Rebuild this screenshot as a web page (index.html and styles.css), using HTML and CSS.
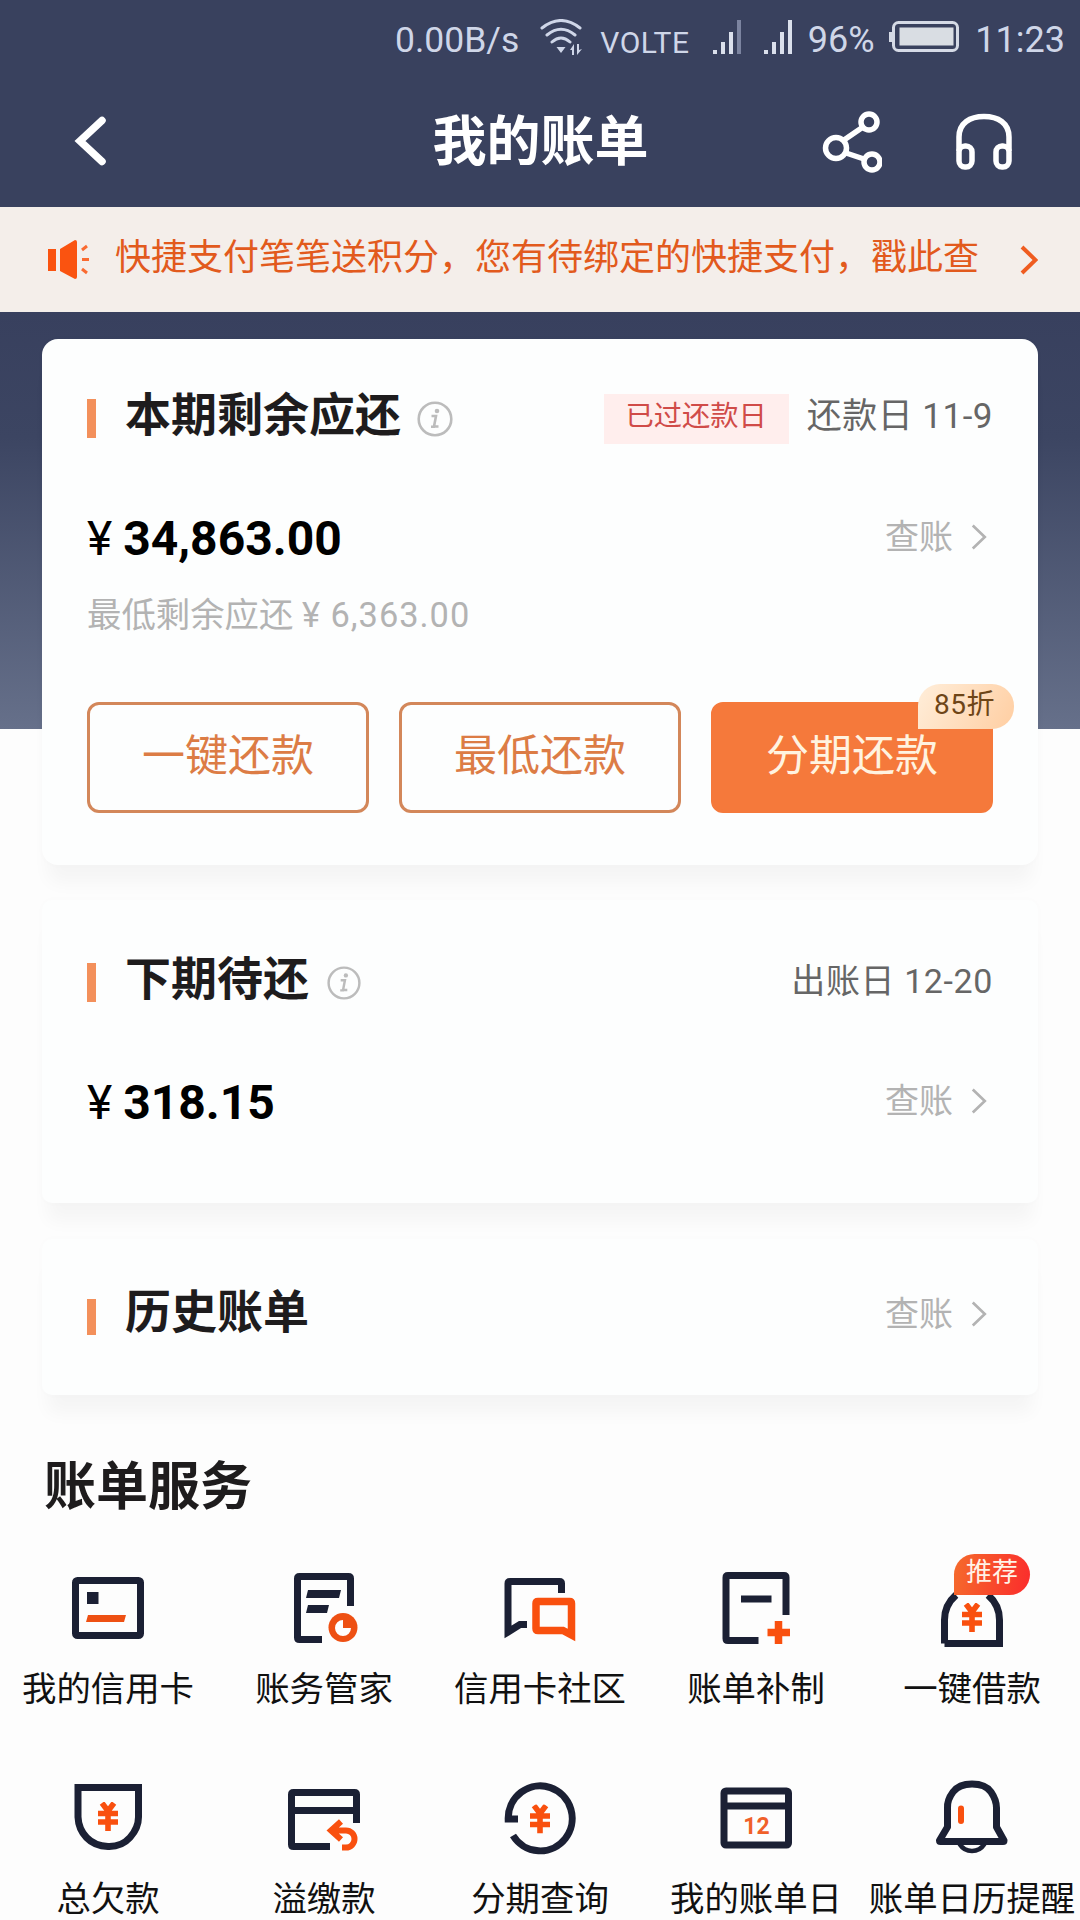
FILE: index.html
```html
<!DOCTYPE html>
<html lang="zh-CN">
<head>
<meta charset="utf-8">
<title>我的账单</title>
<link rel="stylesheet" href="styles.css">
</head>
<body>
<svg class="defs" width="0" height="0" aria-hidden="true">
  <symbol id="yuan" viewBox="0 0 20 29"><path d="M4 1 10 9 16 1M10 9V29M0 11.500H20M0 20H20" fill="none" stroke="currentColor" stroke-width="5.6"/></symbol>
  <symbol id="info" viewBox="0 0 36 36"><circle cx="18" cy="18" r="16.3" fill="none" stroke="currentColor" stroke-width="2.6"/><path d="M14.500 15H19L17 25.500H21.500M14 25.800H18" fill="none" stroke="currentColor" stroke-width="2.6"/><circle cx="20" cy="10" r="2.300" fill="currentColor"/></symbol>
  <symbol id="chevron" viewBox="0 0 18 30"><path d="M2 2 15.500 15 2 28" fill="none" stroke="currentColor"/></symbol>
</svg>

<header class="top">
  <div class="status">
    <span class="status-text speed">0.00B/s</span>
    <svg class="wifi" width="44" height="36" viewBox="0 0 44 36"><g fill="none" stroke="#cfd6e8" stroke-width="3" stroke-linecap="round"><path d="M2 9Q21-6 40 9M7 16Q21 4.500 35 16M12 23Q21 15 30 23"/></g><path d="M16.500 28H25.500L21 34ZM34 25V36H32V31H30ZM37 25H39V31L42 30 37 36Z" fill="#cfd6e8"/></svg>
    <span class="status-text volte">VOLTE</span>
    <svg class="signal first" width="29" height="35" viewBox="0 0 29 35"><path d="M0 30H4V34H0ZM8 22H12V34H8ZM16 12H20V34H16Z" fill="#dbe0ec"/><path d="M24 0H28V34H24Z" fill="#7c84a0"/></svg>
    <svg class="signal" width="29" height="35" viewBox="0 0 29 35"><path d="M0 30H4V34H0ZM8 22H12V34H8ZM16 12H20V34H16ZM24 0H28V34H24Z" fill="#dbe0ec"/></svg>
    <span class="status-text percent">96%</span>
    <svg class="battery" width="70" height="32" viewBox="0 0 70 32"><rect x="4.500" y="1.500" width="64" height="28" rx="5" fill="none" stroke="#d5dae6" stroke-width="3"/><path d="M0 11H4V21H0Z" fill="#d5dae6"/><rect x="10.500" y="6.500" width="54" height="18" fill="#d9dde3"/></svg>
    <span class="status-text clock">11:23</span>
  </div>
  <nav class="nav">
    <svg class="back" width="32" height="50" viewBox="0 0 32 50"><path d="M28 4.500 6 25 28 45.500" fill="none" stroke="#fff" stroke-width="7.500" stroke-linecap="round"/></svg>
    <h1>我的账单</h1>
    <div class="nav-actions">
      <svg width="60" height="62" viewBox="0 0 60 62"><g fill="none" stroke="#fff" stroke-width="5.500"><circle cx="14" cy="37" r="10.500"/><circle cx="47" cy="11" r="8"/><circle cx="50" cy="51" r="8"/><path d="M22 29 41 16M24 42 42 48"/></g></svg>
      <svg width="58" height="58" viewBox="0 0 58 58"><g fill="none" stroke="#fff" stroke-width="5.500"><path d="M4 38V24C4 10 15 3.500 29 3.500S54 10 54 24V38"/><rect x="4" y="33" width="13" height="21" rx="6"/><rect x="41" y="33" width="13" height="21" rx="6"/></g></svg>
    </div>
  </nav>
</header>

<div class="notice">
  <svg class="horn" width="42" height="40" viewBox="0 0 42 40"><path d="M0 9H8V31H0ZM12 9 27 0Q29 0 29 2V37Q29 39 27 39L12 31Z" fill="#fa5310"/><path d="M34 10 39 6M34 19.500H41M34 29 39 33" fill="none" stroke="#fa6a30" stroke-width="3"/></svg>
  <p>快捷支付笔笔送积分，您有待绑定的快捷支付，戳此查</p>
  <svg class="notice-arrow" width="18" height="30"><use href="#chevron"/></svg>
</div>

<main>
  <section class="card current">
    <div class="card-head">
      <h2><span>本期剩余应还</span></h2>
      <svg class="info" width="36" height="36"><use href="#info"/></svg>
      <span class="overdue">已过还款日</span>
      <span class="date">还款日 11-9</span>
    </div>
    <div class="amount-row">
      <p class="amount"><span>¥</span>34,863.00</p>
      <a class="check">查账<svg width="16" height="28"><use href="#chevron"/></svg></a>
    </div>
    <p class="minimum">最低剩余应还 <span>¥ 6,363.00</span></p>
    <div class="buttons">
      <button>一键还款</button>
      <button>最低还款</button>
      <button class="primary">分期还款<span class="discount">85折</span></button>
    </div>
  </section>

  <section class="card next">
    <div class="card-head">
      <h2><span>下期待还</span></h2>
      <svg class="info" width="34" height="36"><use href="#info"/></svg>
      <span class="date bill-date">出账日 12-20</span>
    </div>
    <div class="amount-row">
      <p class="amount"><span>¥</span>318.15</p>
      <a class="check">查账<svg width="16" height="28"><use href="#chevron"/></svg></a>
    </div>
  </section>

  <section class="card history">
    <div class="card-head">
      <h2><span>历史账单</span></h2>
      <a class="check">查账<svg width="16" height="28"><use href="#chevron"/></svg></a>
    </div>
  </section>

  <h2 class="services-title">账单服务</h2>
  <div class="services">
    <div class="service">
      <svg viewBox="0 0 120 100"><rect class="ink" x="27.500" y="20.500" width="65" height="55" rx="2"/><path class="ink-fill" d="M39 32H50.500V44H39Z"/><path class="hot-fill" d="M40 55H78L76 62H38Z"/></svg>
      <span>我的信用卡</span>
    </div>
    <div class="service">
      <svg viewBox="0 0 120 100"><path class="ink" d="M86.500 46V18.500Q86.500 16.500 84.500 16.500H35.500Q33.500 16.500 33.500 18.500V77.500Q33.500 79.500 35.500 79.500H58"/><path class="ink-fill" d="M44 30H77L75 38H42ZM44 45H65L63 53H42Z"/><circle class="hot-fill" cx="79" cy="67.500" r="14.500"/><path d="M79 60A8 8 0 1 0 87 68H79Z" fill="#fff"/></svg>
      <span>账务管家</span>
    </div>
    <div class="service">
      <svg viewBox="0 0 120 100"><path class="ink" d="M81.500 33V23.500Q81.500 21.500 79.500 21.500H30Q28 21.500 28 23.500V72L40 64.500H47"/><path class="hot" d="M91.500 75V43.500Q91.500 41.500 89.500 41.500H58Q56 41.500 56 43.500V68.500Q56 70.500 58 70.500H83Z"/></svg>
      <span>信用卡社区</span>
    </div>
    <div class="service">
      <svg viewBox="0 0 120 100"><path class="ink" d="M90 55V17.500Q90 15.500 88 15.500H32Q30 15.500 30 17.500V78.500Q30 80.500 32 80.500H62.500M45 39H75.500"/><path class="hot" d="M71.500 72.500H94M82.500 61V84"/></svg>
      <span>账单补制</span>
    </div>
    <div class="service">
      <svg viewBox="0 0 120 100"><path class="ink" d="M32.500 83.500V60Q32.500 45 44 35M76 35Q87.500 45 87.500 60V83.500H32.500"/><use class="yuan" href="#yuan" x="50" y="43" width="20" height="29"/></svg>
      <em class="recommend">推荐</em>
      <span>一键借款</span>
    </div>
    <div class="service">
      <svg viewBox="0 0 120 100"><path class="ink" d="M30 17.500H90.500V47Q90.500 58 82 67.500T60 76.500T38.500 67.500T30 47Z"/><use class="yuan" href="#yuan" x="50" y="32" width="20" height="29"/></svg>
      <span>总欠款</span>
    </div>
    <div class="service">
      <svg viewBox="0 0 120 100"><path class="ink" d="M92.500 53V24.500Q92.500 22.500 90.500 22.500H29.500Q27.500 22.500 27.500 24.500V74.500Q27.500 76.500 29.500 76.500H66M27.500 40.500H92.500"/><path class="hot arrow" d="M77 51.500 67 60.500 77 69.500M67 60.500H82A8.500 8.500 0 0 1 82 77.500H78"/></svg>
      <span>溢缴款</span>
    </div>
    <div class="service">
      <svg viewBox="0 0 120 100"><path class="ink" d="M38 49H28.200A32 32.500 0 1 1 33 65.500"/><use class="yuan" href="#yuan" x="50" y="34.500" width="20" height="29"/></svg>
      <span>分期查询</span>
    </div>
    <div class="service">
      <svg viewBox="0 0 120 100"><rect class="ink" x="28" y="21" width="64.500" height="54" rx="2"/><path class="ink" d="M28 36H92"/><text class="day" x="60.500" y="63.500">12</text></svg>
      <span>我的账单日</span>
    </div>
    <div class="service">
      <svg viewBox="0 0 120 100"><path class="ink bell" d="M60 14Q47 14 41 22T35.500 38V57L27.500 70.500Q27.500 71.500 28.500 71.500H91Q92 71.500 92 70.500L84.500 57V38Q84.500 30 79 22T60 14Z"/><path class="ink thin" d="M47.500 74Q52 81 60 81T72.500 74"/><path class="hot bell-mark" d="M49 38.500V51"/></svg>
      <span>账单日历提醒</span>
    </div>
  </div>
</main>
</body>
</html>
```
FILE: styles.css
```css
* { box-sizing: border-box; }
body {
  margin: 0;
  width: 1080px;
  height: 1920px;
  overflow: hidden;
  background: #fdfdfd;
  color: #1e1c1d;
  font-family: Roboto, "Noto Sans CJK SC", sans-serif;
}
h1, h2, p { margin: 0; }
.defs { position: absolute; }

/* status bar and title */
.top { height: 207px; background: #39415e; }
.status {
  height: 74px;
  padding: 0 15px 0 395px;
  display: flex;
  align-items: center;
  color: #cfd6e8;
  white-space: nowrap;
}
.status svg { flex: none; }
.status-text { font-size: 36px; line-height: 44px; padding-top: 6px; }
.speed { width: 146px; font-size: 35.500px; }
.wifi { margin-right: 16px; }
.status-text.volte { width: 113px; font-size: 30px; letter-spacing: .5px; padding-top: 12px; }
.signal.first { margin-right: 22px; }
.signal { margin-right: 15px; }
.percent { width: 82px; }
.battery { margin-right: 16px; }
.nav {
  height: 133px;
  padding: 0 67px 0 74px;
  display: grid;
  grid-template-columns: 1fr auto 1fr;
  align-items: center;
}
.nav h1 { color: #fff; font-size: 54px; line-height: 72px; font-weight: 700; padding-top: 5px; margin: 0 3px 0 -3px; }
.back { margin-top: 1px; }
.nav-actions { display: flex; justify-content: flex-end; align-items: center; gap: 73px; padding-top: 2px; }

/* scrolling notice */
.notice {
  height: 105px;
  padding: 0 42px 0 48px;
  display: flex;
  align-items: center;
  background: #f4eeea;
  color: #e25a1d;
}
.notice p { width: 906px; margin-left: 25px; padding-bottom: 3px; font-size: 36px; line-height: 48px; white-space: nowrap; }
.notice-arrow { color: #ef5c20; flex: none; margin-left: -1px; stroke-width: 4; }

/* bill cards */
main {
  padding-top: 27px;
  background: linear-gradient(#38405e 0%, #3c4562 30%, #66708a 100%) 0 0 / 100% 417px no-repeat;
}
.card {
  margin: 0 42px;
  padding: 0 45px;
  border-radius: 16px;
  background: #fdfefe;
  box-shadow: 0 24px 18px -6px rgba(40, 30, 35, .034), 0 0 10px rgba(40, 30, 35, .015);
}
.current { height: 526px; padding-top: 38px; }
.next { height: 303px; margin-top: 35px; padding-top: 41px; border-radius: 10px; }
.history { height: 156px; margin-top: 36px; padding-top: 36px; border-radius: 10px; }
.card-head { height: 80px; display: flex; align-items: center; }
.card-head h2 { display: flex; align-items: center; font-size: 46px; line-height: 60px; font-weight: 700; }
.card-head h2::before { content: ""; width: 9px; height: 39px; margin: 3px 29px 0 0; background: #f3905b; }
.card-head h2 span { padding-bottom: 4px; }
.history .card-head h2::before { height: 36px; }
.history .card-head h2 span { padding-bottom: 7px; }
.info { margin-left: 16px; margin-top: 3px; color: #bcbcbc; }
.next .info { margin-left: 18px; }
.overdue {
  width: 185px;
  height: 50px;
  margin: 3px 18px 0 auto;
  background: #ffeeed;
  color: #d04b48;
  font-size: 28.300px;
  line-height: 46px;
  text-align: center;
}
.date { color: #666; font-size: 35px; line-height: 44px; letter-spacing: .5px; }
.bill-date { margin-left: auto; font-size: 34px; letter-spacing: .6px; }
.amount-row { height: 60px; margin-top: 52px; display: flex; align-items: center; justify-content: space-between; }
.amount { color: #000; font-size: 48px; line-height: 60px; font-weight: 700; }
.amount span { font-weight: 400; margin-right: 11px; }
.check { display: flex; align-items: center; gap: 18px; margin: 0 6px 4px 0; color: #b3b3b3; font-size: 34px; line-height: 44px; stroke-width: 3; }
.history .check { margin: 0 6px 2px auto; }
.minimum { margin-top: 24px; color: #b3b3b3; font-size: 34.400px; line-height: 44px; }
.minimum span { letter-spacing: 1px; }
.buttons { margin-top: 65px; display: grid; grid-template-columns: repeat(3, 282px); gap: 30px; }
button {
  position: relative;
  height: 111px;
  padding: 0 0 3px;
  border: 3px solid #d3875a;
  border-radius: 12px;
  background: transparent;
  color: #dc7c45;
  font: 43px/60px Roboto, "Noto Sans CJK SC", sans-serif;
}
button.primary { background: #f5793b; border-color: #f5793b; color: #fff3e0; }
.discount {
  position: absolute;
  top: -21px;
  right: -24px;
  width: 96px;
  height: 45px;
  padding-right: 3px;
  border-radius: 22px 22px 22px 0;
  background: linear-gradient(120deg, #ffeeda, #ffcea2);
  color: #6e4517;
  font-size: 28px;
  line-height: 42px;
  letter-spacing: .5px;
  text-align: center;
}

/* service grid */
.services-title { margin: 55px 0 0 44px; font-size: 52px; line-height: 76px; font-weight: 700; }
.services { margin-top: 34px; display: grid; grid-template-columns: repeat(5, 216px); grid-auto-rows: 210px; }
.service { position: relative; display: flex; flex-direction: column; align-items: center; color: #111; font-size: 34.400px; line-height: 48px; white-space: nowrap; }
.service svg { width: 120px; height: 100px; margin-bottom: 5px; }
.ink { fill: none; stroke: #1b2034; stroke-width: 7; }
.ink-fill { fill: #1b2034; }
.hot { fill: none; stroke: #f9500f; stroke-width: 7.5; }
.hot-fill { fill: #ee5013; }
.arrow { stroke-width: 6; }
.thin { stroke-width: 4.5; }
.bell { stroke-linejoin: round; }
.bell-mark { stroke-width: 6; stroke-linecap: round; }
.yuan { color: #f9500f; }
.day { fill: #f0602a; font: 700 23px Roboto, sans-serif; text-anchor: middle; }
.recommend {
  position: absolute;
  left: 90px;
  top: -6px;
  width: 76px;
  height: 41px;
  border-radius: 21px 21px 21px 0;
  background: linear-gradient(100deg, #f56b2c, #fb2c2c);
  color: #fff3e8;
  font-size: 26px;
  line-height: 37px;
  font-style: normal;
  text-align: center;
}
```
